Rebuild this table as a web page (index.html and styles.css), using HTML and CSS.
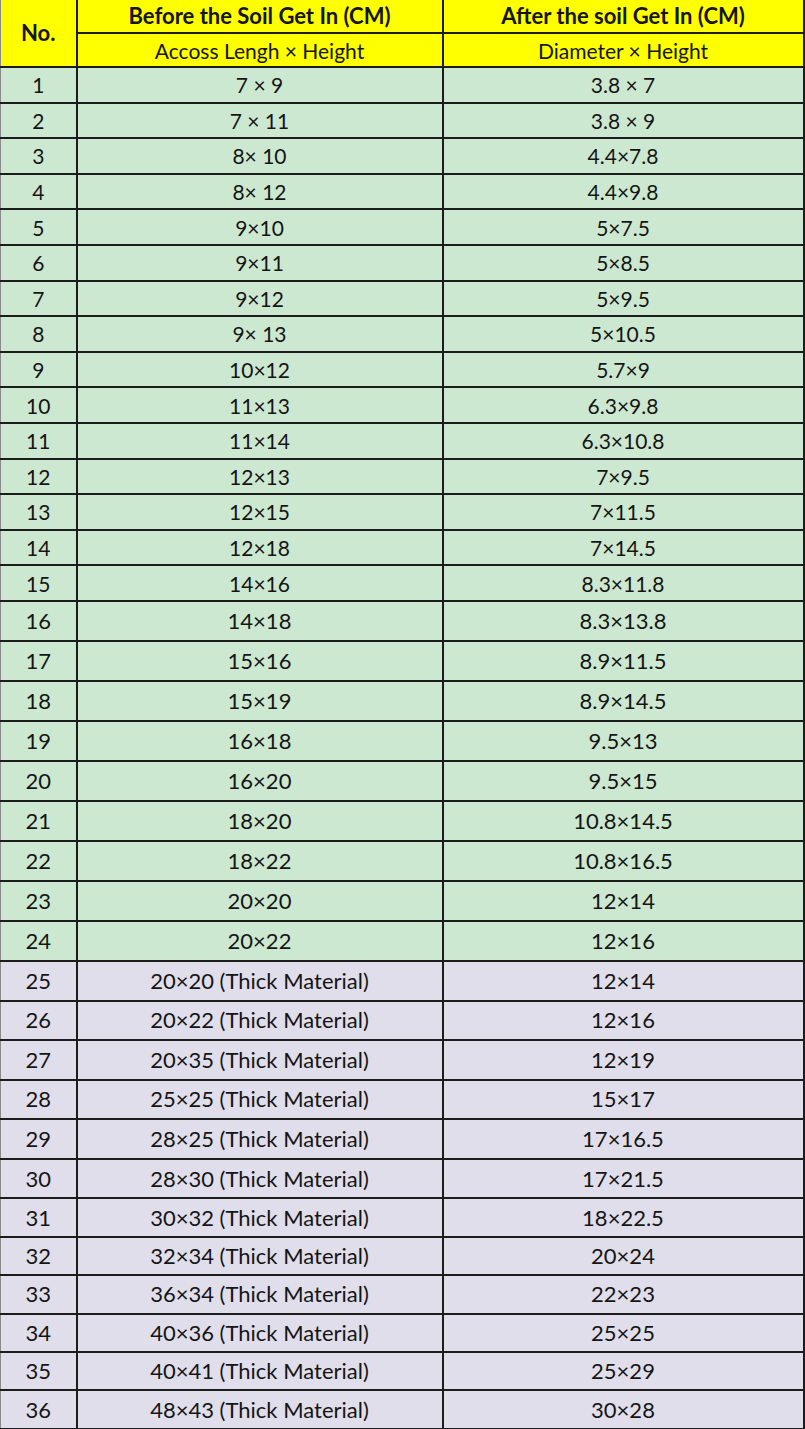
FILE: index.html
```html
<!DOCTYPE html>
<html>
<head>
<meta charset="utf-8">
<link rel="stylesheet" href="styles.css">
</head>
<body>
<table class="sheet">
  <colgroup><col class="c-no"><col class="c-before"><col class="c-after"></colgroup>
  <thead>
    <tr class="h1"><th rowspan="2" class="no-head">No.</th><th>Before the Soil Get In (CM)</th><th>After the soil Get In (CM)</th></tr>
    <tr class="h2"><td>Accoss Lengh × Height</td><td>Diameter × Height</td></tr>
  </thead>
  <tbody class="green s1">
    <tr><td>1</td><td>7 × 9</td><td>3.8 × 7</td></tr>
    <tr><td>2</td><td>7 × 11</td><td>3.8 × 9</td></tr>
    <tr><td>3</td><td>8× 10</td><td>4.4×7.8</td></tr>
    <tr><td>4</td><td>8× 12</td><td>4.4×9.8</td></tr>
    <tr><td>5</td><td>9×10</td><td>5×7.5</td></tr>
    <tr><td>6</td><td>9×11</td><td>5×8.5</td></tr>
    <tr><td>7</td><td>9×12</td><td>5×9.5</td></tr>
    <tr><td>8</td><td>9× 13</td><td>5×10.5</td></tr>
    <tr><td>9</td><td>10×12</td><td>5.7×9</td></tr>
    <tr><td>10</td><td>11×13</td><td>6.3×9.8</td></tr>
    <tr><td>11</td><td>11×14</td><td>6.3×10.8</td></tr>
    <tr><td>12</td><td>12×13</td><td>7×9.5</td></tr>
    <tr><td>13</td><td>12×15</td><td>7×11.5</td></tr>
    <tr><td>14</td><td>12×18</td><td>7×14.5</td></tr>
    <tr><td>15</td><td>14×16</td><td>8.3×11.8</td></tr>
  </tbody>
  <tbody class="green s2">
    <tr><td>16</td><td>14×18</td><td>8.3×13.8</td></tr>
    <tr><td>17</td><td>15×16</td><td>8.9×11.5</td></tr>
    <tr><td>18</td><td>15×19</td><td>8.9×14.5</td></tr>
    <tr><td>19</td><td>16×18</td><td>9.5×13</td></tr>
    <tr><td>20</td><td>16×20</td><td>9.5×15</td></tr>
    <tr><td>21</td><td>18×20</td><td>10.8×14.5</td></tr>
    <tr><td>22</td><td>18×22</td><td>10.8×16.5</td></tr>
    <tr><td>23</td><td>20×20</td><td>12×14</td></tr>
    <tr><td>24</td><td>20×22</td><td>12×16</td></tr>
  </tbody>
  <tbody class="lav s3">
    <tr><td>25</td><td>20×20 (Thick Material)</td><td>12×14</td></tr>
    <tr><td>26</td><td>20×22 (Thick Material)</td><td>12×16</td></tr>
    <tr><td>27</td><td>20×35 (Thick Material)</td><td>12×19</td></tr>
    <tr><td>28</td><td>25×25 (Thick Material)</td><td>15×17</td></tr>
    <tr><td>29</td><td>28×25 (Thick Material)</td><td>17×16.5</td></tr>
    <tr><td>30</td><td>28×30 (Thick Material)</td><td>17×21.5</td></tr>
  </tbody>
  <tbody class="lav s4">
    <tr><td>31</td><td>30×32 (Thick Material)</td><td>18×22.5</td></tr>
    <tr><td>32</td><td>32×34 (Thick Material)</td><td>20×24</td></tr>
    <tr><td>33</td><td>36×34 (Thick Material)</td><td>22×23</td></tr>
    <tr><td>34</td><td>40×36 (Thick Material)</td><td>25×25</td></tr>
    <tr><td>35</td><td>40×41 (Thick Material)</td><td>25×29</td></tr>
    <tr><td>36</td><td>48×43 (Thick Material)</td><td>30×28</td></tr>
  </tbody>
</table>
</body>
</html>
```

FILE: styles.css
```css
html, body {
  margin: 0;
  padding: 0;
  background: #ffffff;
}

body {
  font-family: Lato, "Liberation Sans", sans-serif;
  color: #151515;
  overflow: hidden;
}

.sheet {
  width: 803px;
  border-collapse: collapse;
  table-layout: fixed;
}

.c-no { width: 76px; }
.c-before { width: 366px; }
.c-after { width: 361px; }

.sheet th,
.sheet td {
  border: 2px solid #1c1c1c;
  padding: 0;
  text-align: center;
  vertical-align: middle;
  white-space: nowrap;
  overflow: hidden;
  line-height: 1;
}

.sheet tr > :first-child {
  border-left: 1px solid #8a8a8a;
}

.sheet thead th,
.sheet thead td {
  background: #ffff00;
  border-top: none;
}

.h1 th {
  height: 32px;
  font-size: 22px;
  font-weight: 700;
}

.no-head {
  font-size: 23px;
}

.h2 td {
  height: 32px;
  font-size: 21px;
}

.green td { background: #cde8d1; }
.lav td { background: #e1deeb; }

.s1 td {
  height: 33.6px;
  font-size: 21px;
}

.s2 td {
  height: 38px;
  font-size: 22px;
}

.s3 td {
  height: 37.6px;
  font-size: 22px;
}

.s4 td {
  height: 36.4px;
  font-size: 22px;
}
```
